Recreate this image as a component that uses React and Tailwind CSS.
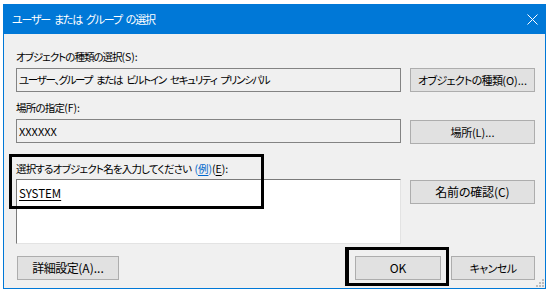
function Sp({ w = "w-[4px]" }) {
  return <span className={`inline-block ${w}`} />;
}

function L({ children }) {
  return <span className="tracking-normal">{children}</span>;
}

export default function App() {
  const font = "font-['Noto_Sans_CJK_JP','Noto_Sans',sans-serif] [font-feature-settings:'palt']";
  const btn =
    "flex items-center justify-center whitespace-nowrap h-[24px] bg-[#e1e1e1] border border-[#adadad] text-[11px] leading-none text-black";
  return (
    <div className={`relative w-[555px] h-[295px] bg-white ${font}`}>
      <div className="absolute left-[3px] top-[4px] w-[543px] h-[285px] flex flex-col bg-[#f0f0f0] border-x border-b border-[#0078d7]">
        {/* title bar */}
        <div className="h-[30px] -mx-px bg-[#0078d7] flex items-center justify-between pl-[9px] pr-[8px]">
          <span className="text-white text-[11px] leading-none tracking-[-1.2px] whitespace-nowrap">
            ユーザー<Sp />または<Sp />グループ<Sp />の選択
          </span>
          <svg width="11" height="11" viewBox="0 0 11 11">
            <path d="M0.5 0.5 L10.5 10.5 M10.5 0.5 L0.5 10.5" stroke="#ffffff" strokeWidth="1" fill="none" />
          </svg>
        </div>
        {/* body */}
        <div className="flex flex-col pl-[12px] pr-[10px] pt-[15px] text-[10.5px] text-black">
          <div className="h-[16px] leading-[16px] tracking-[-1px] whitespace-nowrap">
            オブジェクトの種類の選択<L>(S):</L>
          </div>
          <div className="flex gap-[9px] mt-[3px]">
            <div className="w-[385px] h-[24px] border border-[#838383] bg-[#f0f0f0] flex items-center pl-[2px] leading-none tracking-[-1.3px] whitespace-nowrap overflow-hidden">
              ユーザー、グループ<Sp />または<Sp />ビルトイン<Sp />セキュリティ<Sp />プリンシパル
            </div>
            <div className={`${btn} w-[125px] tracking-[-0.7px]`}>
              オブジェクトの種類<L>(O)...</L>
            </div>
          </div>
          <div className="h-[16px] leading-[16px] mt-[8px] tracking-[-0.8px] whitespace-nowrap">
            場所の指定<L>(F):</L>
          </div>
          <div className="flex gap-[9px] mt-[3px]">
            <div className="w-[385px] h-[24px] border border-[#838383] bg-[#f0f0f0] flex items-center pl-[2px] leading-none text-[11px]">
              XXXXXX
            </div>
            <div className={`${btn} w-[125px] mt-px tracking-[-0.3px]`}>
              場所<L>(L)...</L>
            </div>
          </div>
          <div className="h-[16px] leading-[16px] mt-[17px] tracking-[-0.8px] whitespace-nowrap">
            選択するオブジェクト名を入力してください<Sp w="w-[3px]" />
            <span className="text-[#0066cc] tracking-normal">
              (<span className="underline underline-offset-2">例</span>)
            </span>
            <L>
              (<span className="underline underline-offset-2">E</span>):
            </L>
          </div>
          <div className="flex gap-[9px] mt-[2px]">
            <div className="w-[385px] h-[65px] bg-white border-t border-l border-[#7a7a7a] border-r border-b border-r-[#e3e3e3] border-b-[#e3e3e3] pl-[2px] pt-[5px]">
              <span className="underline underline-offset-2 leading-[16px] text-[11.5px]">SYSTEM</span>
            </div>
            <div className={`${btn} w-[125px] h-[23px] mt-px text-[12px] tracking-[-0.2px]`}>
              名前の確認<L>(C)</L>
            </div>
          </div>
          <div className="flex mt-[12px]">
            <div className={`${btn} w-[102px] ml-px text-[12px] tracking-[-0.5px]`}>
              詳細設定<L>(A)...</L>
            </div>
            <div className="flex-1" />
            <div className={`${btn} w-[86px] text-[12px]`}>OK</div>
            <div className={`${btn} w-[84px] ml-[10px] tracking-[-0.6px]`}>キャンセル</div>
          </div>
        </div>
        {/* resize grip */}
        <svg width="8" height="8" viewBox="0 0 8 8" className="absolute right-[1px] bottom-[1px]">
          <rect x="6" y="0" width="2" height="2" fill="#bcbcbc" />
          <rect x="3" y="3" width="2" height="2" fill="#bcbcbc" />
          <rect x="6" y="3" width="2" height="2" fill="#bcbcbc" />
          <rect x="0" y="6" width="2" height="2" fill="#bcbcbc" />
          <rect x="3" y="6" width="2" height="2" fill="#bcbcbc" />
          <rect x="6" y="6" width="2" height="2" fill="#bcbcbc" />
        </svg>
      </div>
      {/* annotation rectangles */}
      <div className="absolute left-[9px] top-[154px] w-[255px] h-[55px] border-[3px] border-black" />
      <div className="absolute left-[345px] top-[247px] w-[104px] h-[39px] border-[3px] border-l-4 border-black" />
    </div>
  );
}
